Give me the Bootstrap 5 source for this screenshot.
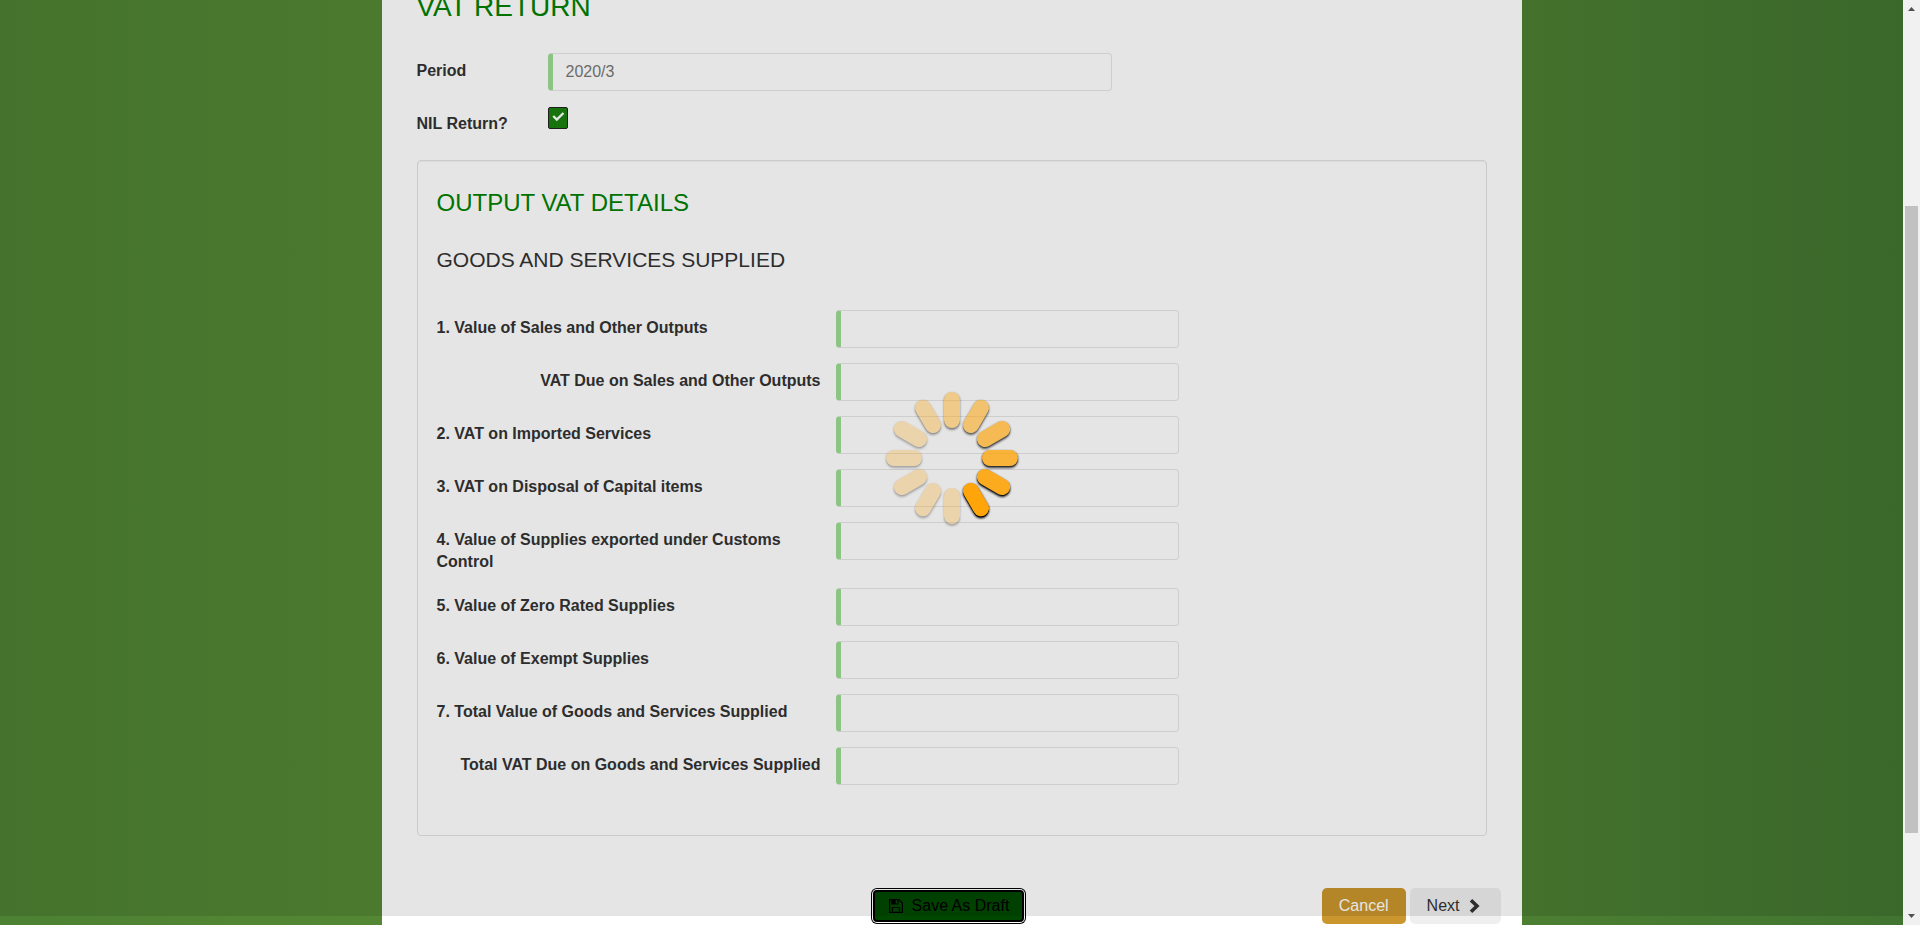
<!DOCTYPE html>
<html lang="en">
<head>
<meta charset="utf-8">
<meta name="viewport" content="width=device-width, initial-scale=1">
<title>VAT Return</title>
<link href="https://cdn.jsdelivr.net/npm/bootstrap@5.3.0/dist/css/bootstrap.min.css" rel="stylesheet">
<style>
  body { font-family: "Liberation Sans", Arial, sans-serif; font-size: 16px; line-height: 22px; color: #333; }
  .page-bg { background: linear-gradient(90deg, #4d8133 0%, #558834 22%, #4c7f32 80%, #417430 100%); }
  .sheet { max-width: 1140px; padding: 0 35px; margin-top: -10px; min-height: calc(100vh + 10px); }
  .sheet h1, .sheet h2 { color: #008000; }
  .sheet h1 { font-size: 28px; line-height: 34px; margin-bottom: 29px; font-weight: 400; }
  .sheet h2 { font-size: 24px; line-height: 28px; margin-bottom: 30px; font-weight: 400; }
  .sheet h3 { font-size: 21px; line-height: 26px; margin-bottom: 37px; font-weight: 400; }
  .form-line { display: grid; column-gap: 15px; margin-bottom: 15px; align-items: start; min-height: 38px; }
  .line-top { grid-template-columns: 116px minmax(0, 564px); }
  .line-item { grid-template-columns: 384px minmax(0, 343px); }
  .form-line label { font-weight: 700; padding-top: 7px; }
  .form-control.field { height: 38px; border: 1px solid #e6e6e6; border-left: 5px solid #9bdb92; border-radius: 4px; background: #fff; color: #777; font-size: 16px; padding: 6px 13px; }
  .tick-box { appearance: none; width: 20px; height: 22px; margin: 1px 0 0; border: 1px solid #222; border-radius: 2px;
    background: #1a800f url("data:image/svg+xml,%3Csvg xmlns='http://www.w3.org/2000/svg' viewBox='0 0 18 20'%3E%3Cpath d='M4.2 8 L7.800 11.500 L14.500 5' fill='none' stroke='%23fff' stroke-width='2.4'/%3E%3C/svg%3E") center / 100% no-repeat; }
  .well-box { border: 1px solid #e2e2e2; border-radius: 4px; box-shadow: inset 0 1px 1px rgba(0, 0, 0, .05); padding: 28px 19px 35px; margin-bottom: 52px; }
  .action-row { display: grid; grid-template-columns: 1fr auto 1fr; margin: 0 -14px 0 -20px; align-items: center; }
  .action-row .btn { height: 36px; font-size: 16px; line-height: 22px; padding: 6px 16px; border: 1px solid transparent; border-radius: 5px; }
  .action-row .btn-save { height: 32px; border: 2px solid #000; color: #000; background: #004800; padding: 3px 13px; margin: 2px; box-shadow: 0 0 0 1px #fff, 0 0 0 2px #000; border-radius: 4px; }
  .action-row .btn-cancel { background: #ca962d; color: #fff; }
  .action-row .btn-next { background: #efefef; color: #333; }
  .busy { height: 99vh; background: rgba(0, 0, 0, .1); }
  .busy svg g.spoke { filter: drop-shadow(0 1px 0 #000) drop-shadow(0 1px 1px #000); }
  .scroll-rail { width: 17px; background: #f1f1f1; }
  .rail-end { height: 17px; }
  .rail-thumb { background: #c1c1c1; margin: 0 2px; flex: 627 0 0; }
  .rail-before { flex: 189 0 0; }
  .rail-after { flex: 75 0 0; }
</style>
</head>
<body>
<div class="d-flex vh-100 overflow-hidden">
  <div class="page-bg flex-fill position-relative overflow-hidden">
    <main class="sheet bg-white mx-auto">
      <form>
        <h1>VAT RETURN</h1>
        <div class="form-line line-top">
          <label for="period">Period</label>
          <input id="period" class="form-control field" type="text" value="2020/3" readonly>
        </div>
        <div class="form-line line-top mb-3">
          <label for="nil">NIL Return?</label>
          <input id="nil" class="tick-box" type="checkbox" checked>
        </div>
        <section class="well-box">
          <h2>OUTPUT VAT DETAILS</h2>
          <h3>GOODS AND SERVICES SUPPLIED</h3>
          <div class="form-line line-item"><label for="v1">1. Value of Sales and Other Outputs</label><input id="v1" class="form-control field" type="text"></div>
          <div class="form-line line-item"><label class="text-end" for="v1b">VAT Due on Sales and Other Outputs</label><input id="v1b" class="form-control field" type="text"></div>
          <div class="form-line line-item"><label for="v2">2. VAT on Imported Services</label><input id="v2" class="form-control field" type="text"></div>
          <div class="form-line line-item"><label for="v3">3. VAT on Disposal of Capital items</label><input id="v3" class="form-control field" type="text"></div>
          <div class="form-line line-item"><label for="v4">4. Value of Supplies exported under Customs Control</label><input id="v4" class="form-control field" type="text"></div>
          <div class="form-line line-item"><label for="v5">5. Value of Zero Rated Supplies</label><input id="v5" class="form-control field" type="text"></div>
          <div class="form-line line-item"><label for="v6">6. Value of Exempt Supplies</label><input id="v6" class="form-control field" type="text"></div>
          <div class="form-line line-item"><label for="v7">7. Total Value of Goods and Services Supplied</label><input id="v7" class="form-control field" type="text"></div>
          <div class="form-line line-item"><label class="text-end" for="v7b">Total VAT Due on Goods and Services Supplied</label><input id="v7b" class="form-control field" type="text"></div>
        </section>
        <div class="action-row">
          <span></span>
          <button type="button" class="btn btn-save d-flex align-items-center">
            <svg class="me-2" width="16" height="16" viewBox="0 0 16 16" fill="none" stroke="#000" stroke-width="1.2" aria-hidden="true"><path d="M1.600 1.600H11L14.400 5V14.400H1.600Z"/><path d="M4.500 14V9.500H11.500V14M4 2V6H10V2"/><path d="M4.500 2.500H7V5.500H4.500Z" fill="#000"/></svg>
            <span>Save As Draft</span>
          </button>
          <div class="d-flex justify-content-end">
            <button type="button" class="btn btn-cancel me-1">Cancel</button>
            <button type="button" class="btn btn-next d-flex align-items-center">Next
              <svg class="ms-2" width="16" height="16" viewBox="0 0 16 16" fill="none" stroke="#333" stroke-width="3.6" aria-hidden="true"><path d="M3 2.200L9 8L3 13.800"/></svg>
            </button>
          </div>
        </div>
      </form>
    </main>
    <div class="busy position-absolute top-0 start-0 w-100 d-flex align-items-center justify-content-center" role="status" aria-label="Loading">
      <svg width="144" height="144" viewBox="-72 -72 144 144" fill="#ffa50a">
        <g class="spoke" opacity=".42"><rect x="-8" y="-66" width="16" height="36" rx="8"/></g>
        <g class="spoke" opacity=".54"><rect x="-8" y="-66" width="16" height="36" rx="8" transform="rotate(30)"/></g>
        <g class="spoke" opacity=".66"><rect x="-8" y="-66" width="16" height="36" rx="8" transform="rotate(60)"/></g>
        <g class="spoke" opacity=".78"><rect x="-8" y="-66" width="16" height="36" rx="8" transform="rotate(90)"/></g>
        <g class="spoke" opacity=".9"><rect x="-8" y="-66" width="16" height="36" rx="8" transform="rotate(120)"/></g>
        <g class="spoke"><rect x="-8" y="-66" width="16" height="36" rx="8" transform="rotate(150)"/></g>
        <g class="spoke" opacity=".26"><rect x="-8" y="-66" width="16" height="36" rx="8" transform="rotate(180)"/></g>
        <g class="spoke" opacity=".26"><rect x="-8" y="-66" width="16" height="36" rx="8" transform="rotate(210)"/></g>
        <g class="spoke" opacity=".26"><rect x="-8" y="-66" width="16" height="36" rx="8" transform="rotate(240)"/></g>
        <g class="spoke" opacity=".26"><rect x="-8" y="-66" width="16" height="36" rx="8" transform="rotate(270)"/></g>
        <g class="spoke" opacity=".26"><rect x="-8" y="-66" width="16" height="36" rx="8" transform="rotate(300)"/></g>
        <g class="spoke" opacity=".33"><rect x="-8" y="-66" width="16" height="36" rx="8" transform="rotate(330)"/></g>
      </svg>
    </div>
  </div>
  <div class="scroll-rail d-flex flex-column flex-shrink-0" aria-hidden="true">
    <svg class="rail-end" viewBox="0 0 17 17" fill="#505050"><path d="M5 11L8.500 7L12 11Z"/></svg>
    <div class="rail-before"></div>
    <div class="rail-thumb"></div>
    <div class="rail-after"></div>
    <svg class="rail-end" viewBox="0 0 17 17" fill="#505050"><path d="M5 6L8.500 10L12 6Z"/></svg>
  </div>
</div>
<script src="https://cdn.jsdelivr.net/npm/bootstrap@5.3.0/dist/js/bootstrap.bundle.min.js"></script>
</body>
</html>
